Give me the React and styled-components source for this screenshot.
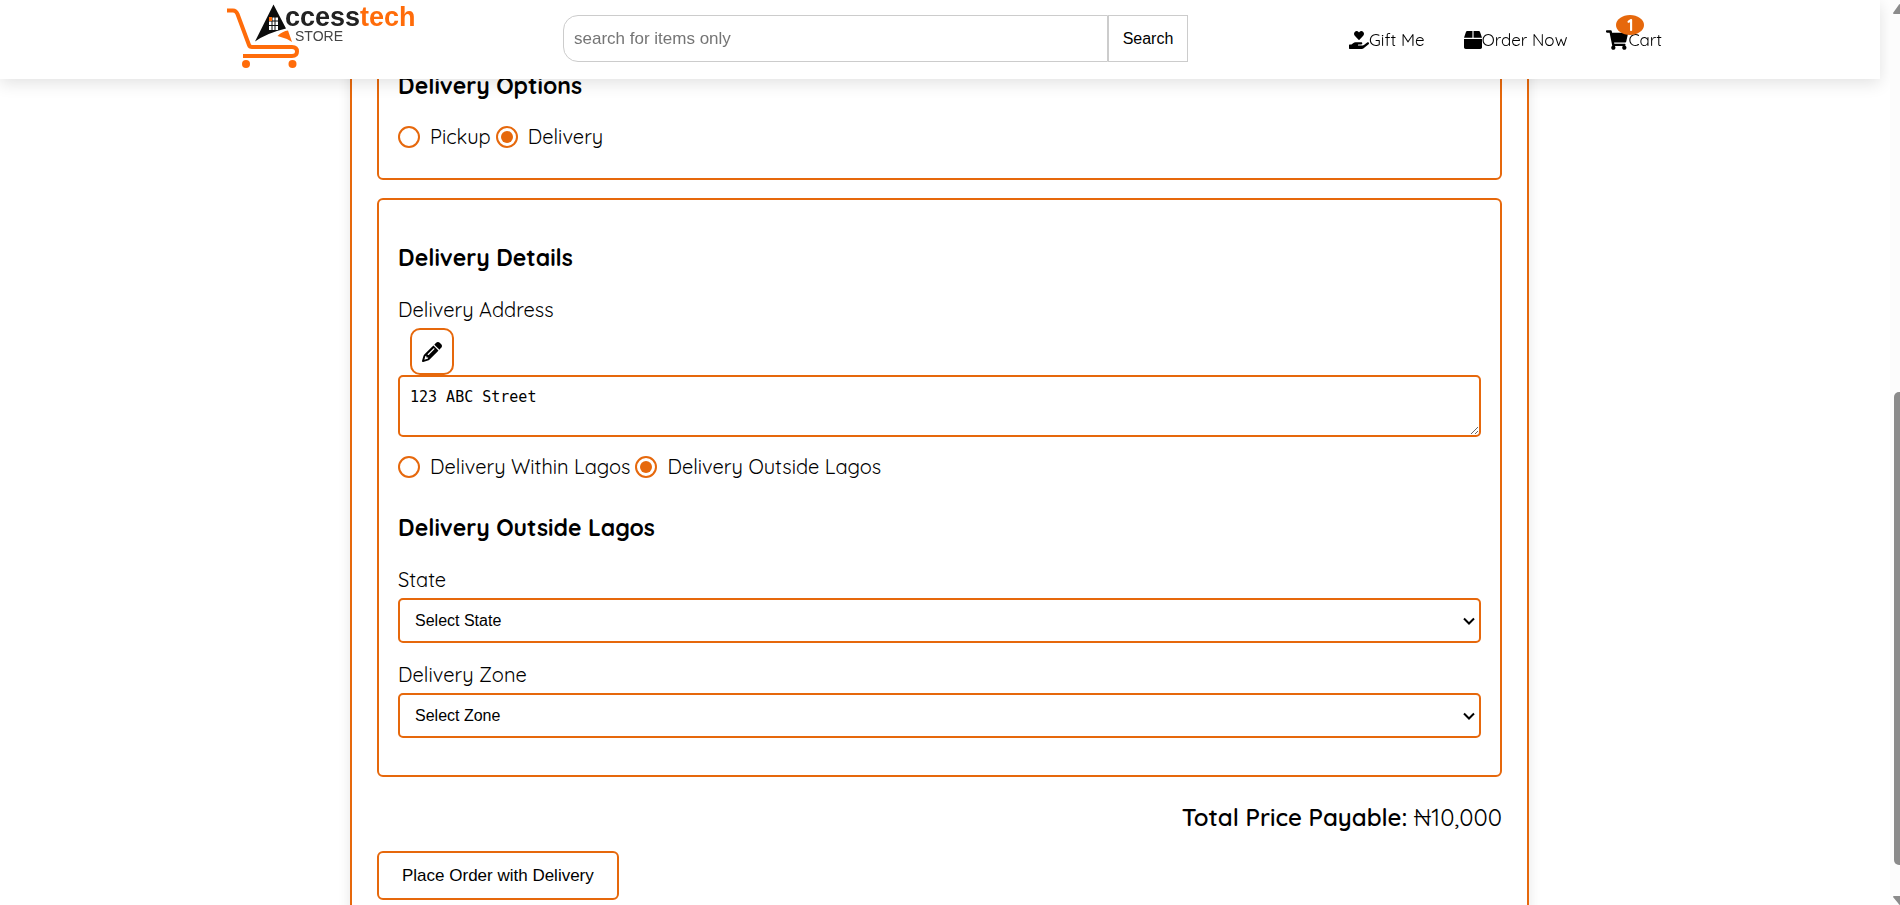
import React, { useState } from "react";
import styled, { createGlobalStyle } from "styled-components";
import { FaBox, FaHandHoldingHeart, FaShoppingCart } from "react-icons/fa";
import { FaPencil } from "react-icons/fa6";

const orange = "#e6680c";
const rounded = `Quicksand, Lato, "Open Sans", sans-serif`;
const arial = `"Liberation Sans", Arial, sans-serif`;

const GlobalStyle = createGlobalStyle`
  *, *::before, *::after { box-sizing: border-box; }
  body { margin: 0; background: #fff; color: #000; font-family: ${rounded}; font-weight: 400; }
`;

const Page = styled.div`
  height: 100vh;
  overflow: hidden;
  padding-right: 21px;
`;

const Header = styled.header`
  position: fixed;
  z-index: 2;
  top: 0;
  left: 0;
  right: 20px;
  height: 79px;
  display: grid;
  grid-template-columns: 563fr 625fr 692fr;
  align-items: center;
  background: #fff;
  box-shadow: 0 4px 16px rgba(0, 0, 0, 0.12);
`;

const LogoLink = styled.a`
  justify-self: end;
  align-self: start;
  margin-right: 146px;
  height: 72px;
`;

const SearchForm = styled.form`
  display: flex;
  height: 47px;
  margin-bottom: 2px;
`;

const SearchInput = styled.input`
  flex: 1;
  min-width: 0;
  padding: 0 10px;
  border: 1px solid #ccc;
  border-radius: 15px 0 0 15px;
  font: 17px ${arial};
  outline: none;
  &::placeholder { color: #757575; }
`;

const SearchButton = styled.button`
  width: 80px;
  padding: 0;
  border: 1px solid #ccc;
  background: #fff;
  color: #000;
  font: 16px ${arial};
`;

const Nav = styled.nav`
  display: flex;
  gap: 39px;
  padding-left: 161px;
`;

const NavLink = styled.a`
  position: relative;
  display: flex;
  align-items: center;
  color: #000;
  font-size: 17px;
  line-height: 22px;
  text-decoration: none;
  white-space: nowrap;
`;

const Badge = styled.span`
  position: absolute;
  left: 10px;
  top: -14px;
  width: 28px;
  height: 20px;
  border-radius: 50%;
  background: ${orange};
  color: #fff;
  font-size: 16px;
  font-weight: 700;
  line-height: 20px;
  text-align: center;
`;

const Checkout = styled.main`
  width: 1179px;
  max-width: 100%;
  min-height: 100vh;
  margin: 0 auto;
  padding: 40px 25px;
  border: solid ${orange};
  border-width: 0 2px;
  box-shadow: 0 0 12px rgba(0, 0, 0, 0.1);
`;

const Card = styled.section`
  padding: ${(p) => (p.$compact ? "29px 19px 30px" : "43px 19px 37px")};
  margin-bottom: 18px;
  border: 2px solid ${orange};
  border-radius: 6px;
`;

const Title = styled.h2`
  margin: 0 0 24px;
  font-size: 23px;
  font-weight: 700;
  line-height: 30px;
`;

const Choices = styled.div`
  display: flex;
  flex-wrap: wrap;
  gap: 5px;
  margin-bottom: ${(p) => (p.$spaced ? "35px" : "0")};
`;

const Choice = styled.label`
  display: flex;
  align-items: center;
  gap: 10px;
  font-size: 20px;
  line-height: 23px;
`;

const Radio = styled.input`
  appearance: none;
  width: 22px;
  height: 22px;
  margin: 0;
  padding: 3px;
  border: 2px solid ${orange};
  border-radius: 50%;
  background: #fff;
  &:checked { background: ${orange} content-box; }
`;

const Label = styled.label`
  display: block;
  margin-bottom: 5px;
  font-size: 20px;
  line-height: 26px;
`;

const EditButton = styled.button`
  display: flex;
  align-items: center;
  justify-content: center;
  width: 44px;
  height: 47px;
  margin-left: 12px;
  padding: 0;
  border: 2px solid ${orange};
  border-radius: 10px;
  background: #fff;
  color: #000;
`;

const Address = styled.textarea`
  display: block;
  width: 100%;
  height: 62px;
  margin-bottom: 18px;
  padding: 10px;
  border: 2px solid ${orange};
  border-radius: 5px;
  background: #fff;
  color: #000;
  font: 15px/20px "DejaVu Sans Mono", monospace;
  outline: none;
`;

const SelectBox = styled.div`
  position: relative;
`;

const Select = styled.select`
  appearance: none;
  display: block;
  width: 100%;
  height: 45px;
  padding: 0 24px 0 15px;
  border: 2px solid ${orange};
  border-radius: 5px;
  background: #fff;
  color: #000;
  font: 16px ${arial};
`;

const Chevron = styled.svg`
  position: absolute;
  top: 19px;
  right: 6px;
  pointer-events: none;
`;

const Field = styled.div`
  & + & { margin-top: 19px; }
`;

const Total = styled.p`
  margin: 0 0 19px;
  padding-top: 7px;
  font-size: 24px;
  line-height: 30px;
  text-align: right;
  strong { font-weight: 600; }
`;

const OrderButton = styled.button`
  height: 49px;
  padding: 0 23px;
  border: 2px solid ${orange};
  border-radius: 6px;
  background: #fff;
  color: #000;
  font: 17px ${arial};
`;

const ScrollTrack = styled.div`
  position: fixed;
  z-index: 3;
  top: 0;
  right: 0;
  bottom: 0;
  width: 10px;
  overflow: hidden;
  background: #fcfcfc;
`;

const ScrollColumn = styled.div`
  display: flex;
  flex-direction: column;
  align-items: flex-end;
  height: 100%;
  padding-top: 4px;
`;

const ScrollThumb = styled.div`
  width: 6px;
  height: 473px;
  margin: auto 0 31px;
  border-radius: 5px 0 0 5px;
  background: #8b8b8b;
`;

function Logo() {
  return (
    <svg width="190" height="72" viewBox="0 0 190 72" role="img" aria-label="Accesstech Store">
      <path d="M0 10.500h6q3 0 4.500 3.500L22 45q.7 2 3 2h40q5 0 5 4.500t-5 4.500H16" fill="none" stroke="#ff6c0a" strokeWidth="4" />
      <circle cx="19" cy="64" r="4" fill="#ff6c0a" />
      <circle cx="65.500" cy="64" r="4" fill="#ff6c0a" />
      <path d="M46.500 4.500 28 41.500Q40 33 59 28.500Z" fill="#0c0c0c" />
      <path d="M42 17.500h9v12.500h-9Z" fill="#fff" />
      <path d="M45 17v13M48 17v13M42 21h9M42 25.500h9" stroke="#0c0c0c" strokeWidth="1" />
      <path d="M42 17h3v4h-3Z" fill="#ff6c0a" />
      <path d="M50.500 36q5-5 10.500-5.500L65 42q-6-4-14.500-6Z" fill="#ff6c0a" />
      <text x="58" y="26" fontFamily="Liberation Sans, Arial, sans-serif" fontSize="27" fontWeight="700" fill="#222">
        ccess<tspan fill="#ff6c0a">tech</tspan>
      </text>
      <text x="68" y="41" fontFamily="Liberation Sans, Arial, sans-serif" fontSize="14" fill="#444">STORE</text>
    </svg>
  );
}

function RadioChoice({ name, value, current, onPick }) {
  return (
    <Choice>
      <Radio type="radio" name={name} checked={current === value} onChange={() => onPick(value)} />
      {value}
    </Choice>
  );
}

function SelectField({ id, label, prompt }) {
  return (
    <Field>
      <Label htmlFor={id}>{label}</Label>
      <SelectBox>
        <Select id={id}><option>{prompt}</option></Select>
        <Chevron width="12" height="8" viewBox="0 0 12 8" aria-hidden="true">
          <path d="M1 1.500 6 6.500 11 1.500" fill="none" stroke="#000" strokeWidth="2" />
        </Chevron>
      </SelectBox>
    </Field>
  );
}

export default function App() {
  const [method, setMethod] = useState("Delivery");
  const [area, setArea] = useState("Delivery Outside Lagos");

  return (
    <Page>
      <GlobalStyle />
      <Header>
        <LogoLink href="#"><Logo /></LogoLink>
        <SearchForm>
          <SearchInput type="text" aria-label="Search items" placeholder="search for items only" />
          <SearchButton type="button">Search</SearchButton>
        </SearchForm>
        <Nav>
          <NavLink href="#"><FaHandHoldingHeart size={20} />Gift Me</NavLink>
          <NavLink href="#"><FaBox size={18} />Order Now</NavLink>
          <NavLink href="#"><FaShoppingCart size={22} />Cart<Badge>1</Badge></NavLink>
        </Nav>
      </Header>

      <Checkout>
        <Card $compact>
          <Title>Delivery Options</Title>
          <Choices>
            <RadioChoice name="method" value="Pickup" current={method} onPick={setMethod} />
            <RadioChoice name="method" value="Delivery" current={method} onPick={setMethod} />
          </Choices>
        </Card>

        <Card>
          <Title>Delivery Details</Title>
          <Label htmlFor="address">Delivery Address</Label>
          <EditButton type="button" aria-label="Edit address"><FaPencil size={20} /></EditButton>
          <Address id="address" defaultValue="123 ABC Street" />
          <Choices $spaced>
            <RadioChoice name="area" value="Delivery Within Lagos" current={area} onPick={setArea} />
            <RadioChoice name="area" value="Delivery Outside Lagos" current={area} onPick={setArea} />
          </Choices>
          <Title>Delivery Outside Lagos</Title>
          <SelectField id="state" label="State" prompt="Select State" />
          <SelectField id="zone" label="Delivery Zone" prompt="Select Zone" />
        </Card>

        <Total><strong>Total Price Payable:</strong> ₦10,000</Total>
        <OrderButton type="button">Place Order with Delivery</OrderButton>
      </Checkout>

      <ScrollTrack aria-hidden="true">
        <ScrollColumn>
          <svg width="7" height="10" viewBox="0 0 7 10"><path d="M0 9 5 2q1-2 2-2v10H1Q0 10 0 9Z" fill="#8b8b8b" /></svg>
          <ScrollThumb />
          <svg width="7" height="9" viewBox="0 0 7 9"><path d="M0 1q0-1 1-1h6v9q-1 0-2-2Z" fill="#8b8b8b" /></svg>
        </ScrollColumn>
      </ScrollTrack>
    </Page>
  );
}
